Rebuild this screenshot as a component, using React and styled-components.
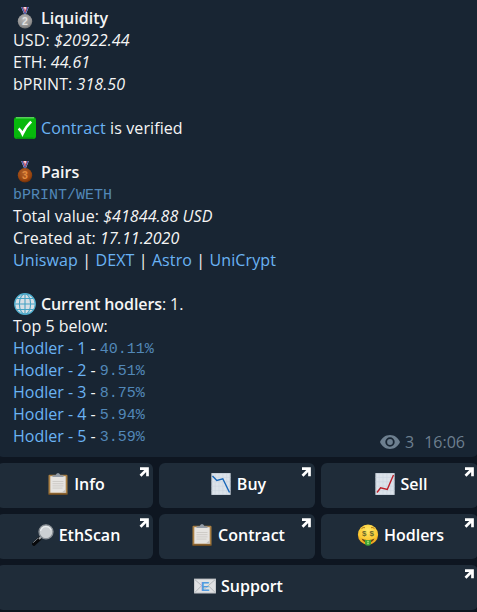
import React from "react";
import styled, { createGlobalStyle } from "styled-components";

const GlobalStyle = createGlobalStyle`
  * { box-sizing: border-box; }
  html, body { margin: 0; background: #0e1621; overflow: hidden; }
  body { font-family: "Open Sans", "Noto Sans", sans-serif; font-size: 16px; color: #f5f5f5; }
`;

const Chat = styled.main`
  width: 481px;
  height: 612px;
  margin-left: -3px;
  overflow: hidden;
  background: #0e1621;
`;

const Message = styled.article`
  height: 457px;
  padding: 7px 13px 0 16px;
  background: #182533;
  border-radius: 0 0 6px 6px;
`;

const Line = styled.div`
  display: flex;
  align-items: center;
  height: 22px;
  line-height: 22px;
  white-space: pre;
  letter-spacing: ${(p) => p.$tracking || 0}px;
`;

const Strong = styled.strong`
  font-weight: 600;
`;

const Value = styled.em`
  font-style: italic;
`;

const Link = styled.a`
  color: #6ab3f3;
  text-decoration: none;
`;

const Code = styled.code`
  padding-top: 4px;
  font-family: "Liberation Mono", monospace;
  font-size: 15px;
  color: #5288b8;
`;

const Emoji = styled.svg`
  width: 22px;
  height: 22px;
  margin: 0 5px 0 1px;
  flex: none;
`;

const Meta = styled.span`
  display: flex;
  align-items: center;
  margin-left: auto;
  padding-top: 11px;
  color: #6d7f8f;
`;

const EyeIcon = styled.svg`
  width: 20px;
  height: 14px;
  margin-right: 5px;
`;

const Time = styled.time`
  margin-left: 10px;
`;

const Keyboard = styled.nav`
  display: grid;
  grid-template-columns: 156px 156px 157px;
  grid-auto-rows: 45px;
  gap: 6px;
  margin-top: 6px;
`;

const KeyButton = styled.button`
  position: relative;
  display: flex;
  align-items: center;
  justify-content: center;
  grid-column: ${(p) => (p.$wide ? "1 / -1" : "auto")};
  padding: 0 0 3px 1px;
  border: 0;
  border-radius: 6px;
  background: #1f2c39;
  color: #fff;
  font: 600 16px/22px "Open Sans", "Noto Sans", sans-serif;
`;

const Arrow = styled.svg`
  position: absolute;
  top: 4px;
  right: 4px;
  width: 10px;
  height: 10px;
`;

function Medal({ place, light, base, dark, ink }) {
  const id = `medal${place}`;
  return (
    <Emoji viewBox="0 0 22 22">
      <defs>
        <radialGradient id={id} cx=".45" cy=".35" r=".7">
          <stop offset="0" stopColor={light} />
          <stop offset=".7" stopColor={base} />
          <stop offset="1" stopColor={dark} />
        </radialGradient>
      </defs>
      <path d="M7.2 0h7.600L11.800 7.500h-1.600z" fill="#eee6f1" />
      <path d="M7.200 0h1.700l2.500 6.500-.8 1z" fill="#4257a8" />
      <path d="M9 0h.8l1.600 4.200-.4 1z" fill="#cf4652" />
      <path d="M14.800 0h-1.700l-2.500 6.500.8 1z" fill="#4257a8" />
      <path d="M13.200 0h-.8l-1.800 5 .5 1.200z" fill="#cf4652" />
      <circle cx="11" cy="14.300" r="7.200" fill={`url(#${id})`} />
      <text x="11" y="18" textAnchor="middle" fontFamily="Liberation Sans, sans-serif" fontSize="10.500" fontWeight="700" fill={ink}>{place}</text>
    </Emoji>
  );
}

function CheckEmoji() {
  return (
    <Emoji viewBox="0 0 22 22">
      <rect width="22" height="22" rx="3" fill="#07b80c" />
      <path d="M2 .8h18" stroke="#65d268" strokeWidth="1.3" />
      <path d="M2.500 21.200h17" stroke="#078d10" strokeWidth="1.3" />
      <path d="M4.600 11.500c1.800 1.500 2.900 3.200 3.900 5.400C10.600 12.300 13 8.400 17.200 4.600" fill="none" stroke="#fff" strokeWidth="2.600" />
    </Emoji>
  );
}

function GlobeEmoji() {
  return (
    <Emoji viewBox="0 0 22 22">
      <circle cx="11" cy="11" r="10.300" fill="#d7dfe5" stroke="#4fb0d0" strokeWidth="1.200" />
      <g fill="none" stroke="#45a2c3" strokeWidth="1.100">
        <path d="M11 .8v20.400M.8 11h20.400M3 5.500h16M3 16.500h16" />
        <ellipse cx="11" cy="11" rx="5.600" ry="10.200" />
      </g>
    </Emoji>
  );
}

function ClipboardEmoji() {
  return (
    <Emoji viewBox="0 0 22 22">
      <rect x="1.500" y="1.800" width="19" height="20" rx="1" fill="#a97f43" />
      <path d="M1.500 20.500h19v1.300h-19z" fill="#68471e" />
      <path d="M3.300 3.200h15.400v16.500H3.300z" fill="#e5e3e0" />
      <path d="M14.500 19.700l4.200-3.500v3.500z" fill="#c5c1bc" />
      <path d="M5.500 8.500h11M5.500 10.700h11M5.500 12.900h11M5.500 15.100h10" stroke="#cecbc7" />
      <path d="M5.500 4V2.300h3L10 .3h2l1.500 2h3V4z" fill="#929ba6" />
    </Emoji>
  );
}

function ChartEmoji({ rising }) {
  return (
    <Emoji viewBox="0 0 22 22">
      <path d="M1.500 0h19v22h-19z" fill="#dce3ea" />
      <path d="M5.200 0v22M9 0v22M12.900 0v22M16.700 0v22M1.500 4.400h19M1.500 8.800h19M1.500 13.200h19M1.500 17.600h19" stroke="#c9d3de" strokeWidth=".5" />
      <path d="M2 .5h18v21H2z" fill="none" stroke="#bcc6d1" strokeWidth=".7" />
      {rising ? (
        <path d="M3 19.500l3.600-4.700 6.700 1.600 2.500-6L19.500 2" fill="none" stroke="#bd1f29" strokeWidth="1.400" />
      ) : (
        <path d="M2.500 3l4.300 4.500 6-1.700L19.500 19.500" fill="none" stroke="#1766b8" strokeWidth="1.400" />
      )}
    </Emoji>
  );
}

function MagnifierEmoji() {
  return (
    <Emoji viewBox="0 0 22 22">
      <path d="M2 20l5.400-5.200" stroke="#08090b" strokeWidth="3.800" strokeLinecap="round" />
      <path d="M1.200 18.700l5-4.700" stroke="#767b80" strokeWidth="1" />
      <path d="M7 15l2-2" stroke="#a5a9ad" strokeWidth="2" />
      <circle cx="14" cy="7.800" r="7" fill="#ccd0d3" stroke="#898f95" strokeWidth="1.300" />
      <path d="M8.600 7a5.500 5.500 0 0 1 10.500-1" fill="none" stroke="#e9edef" strokeWidth="1.300" />
    </Emoji>
  );
}

function MoneyEmoji() {
  return (
    <Emoji viewBox="0 0 22 22">
      <defs>
        <radialGradient id="moneyFace" cx=".5" cy=".3" r=".7">
          <stop offset="0" stopColor="#ffe967" />
          <stop offset=".7" stopColor="#fbc730" />
          <stop offset="1" stopColor="#e99517" />
        </radialGradient>
      </defs>
      <circle cx="11" cy="10.700" r="10.100" fill="url(#moneyFace)" />
      <path d="M4.500 4.600Q6 3 8 3.700M14 3.700q2-.700 3.500 .900" fill="none" stroke="#a16c13" strokeWidth=".900" />
      <g fill="#69682a" fontFamily="Liberation Sans, sans-serif" fontSize="8" fontWeight="700" textAnchor="middle">
        <text x="7.200" y="12">$</text>
        <text x="14.800" y="12">$</text>
      </g>
      <path d="M4.500 14.500q6.500 3.400 13 0-2 4.300-6.500 4.300t-6.500-4.300z" fill="#704714" />
      <path d="M8 15.800q3 .800 6 0v3.500q0 2.500-3 2.500t-3-2.500z" fill="#42a535" />
      <path d="M11 16.500v4M10 17.500h2M10 19.500h2" stroke="#a2df70" strokeWidth=".800" />
    </Emoji>
  );
}

function MailEmoji() {
  return (
    <Emoji viewBox="0 0 22 22">
      <path d="M0 3.800h22v14.500H0z" fill="#dfe1e3" />
      <path d="M.5 4.300L11 13.500 21.500 4.300M.5 17.800l7-7M21.500 17.800l-7-7" fill="none" stroke="#aeb2b6" strokeWidth=".900" />
      <path d="M.4 4.200h21.200v13.700H.4z" fill="none" stroke="#b9bcc0" strokeWidth=".7" />
      <text x="11" y="15.700" textAnchor="middle" fontFamily="Liberation Sans, sans-serif" fontSize="13" fontWeight="700" fill="#529ae0">E</text>
    </Emoji>
  );
}

const hodlers = ["40.11%", "9.51%", "8.75%", "5.94%", "3.59%"];

const actions = [
  { label: "Info", icon: <ClipboardEmoji /> },
  { label: "Buy", icon: <ChartEmoji /> },
  { label: "Sell", icon: <ChartEmoji rising /> },
  { label: "EthScan", icon: <MagnifierEmoji /> },
  { label: "Contract", icon: <ClipboardEmoji /> },
  { label: "Hodlers", icon: <MoneyEmoji /> },
  { label: "Support", icon: <MailEmoji />, wide: true },
];

export default function App() {
  return (
    <>
      <GlobalStyle />
      <Chat>
        <Message>
          <Line><Medal place="2" light="#b9b9b9" base="#929292" dark="#666" ink="#e1e1e1" /><Strong>Liquidity</Strong></Line>
          <Line $tracking={0.13}>USD: <Value>$20922.44</Value></Line>
          <Line>ETH: <Value>44.61</Value></Line>
          <Line $tracking={0.07}>bPRINT: <Value>318.50</Value></Line>
          <Line />
          <Line $tracking={0.1}><CheckEmoji /><Link>Contract</Link> is verified</Line>
          <Line />
          <Line><Medal place="3" light="#b4622b" base="#96440f" dark="#612706" ink="#e48b3d" /><Strong>Pairs</Strong></Line>
          <Line><Code>bPRINT/WETH</Code></Line>
          <Line $tracking={0.07}>Total value: <Value>$41844.88 USD</Value></Line>
          <Line $tracking={0.08}>Created at: <Value>17.11.2020</Value></Line>
          <Line $tracking={0.11}><Link>Uniswap</Link> | <Link>DEXT</Link> | <Link>Astro</Link> | <Link>UniCrypt</Link></Line>
          <Line />
          <Line $tracking={-0.09}><GlobeEmoji /><Strong>Current hodlers</Strong>: 1.</Line>
          <Line>Top 5 below:</Line>
          {hodlers.map((share, i) => (
            <Line key={share}>
              <Link>Hodler - {i + 1}</Link> - <Code>{share}</Code>
              {i === hodlers.length - 1 && (
                <Meta>
                  <EyeIcon viewBox="0 0 20 14">
                    <path fill="currentColor" fillRule="evenodd" d="M10 0C5.500 0 1.700 2.800 0 7c1.700 4.200 5.500 7 10 7s8.300-2.800 10-7c-1.700-4.200-5.500-7-10-7zm0 11.700a4.700 4.700 0 1 1 0-9.400 4.700 4.700 0 0 1 0 9.400z" />
                    <circle cx="10" cy="7" r="2.900" fill="currentColor" />
                  </EyeIcon>
                  3<Time>16:06</Time>
                </Meta>
              )}
            </Line>
          ))}
        </Message>
        <Keyboard>
          {actions.map(({ label, icon, wide }) => (
            <KeyButton key={label} $wide={wide}>
              {icon}{label}
              <Arrow viewBox="0 0 10 10">
                <path d="M1 1.700h7.500V9.200M8 2.200L1.500 8.700" fill="none" stroke="#fff" strokeWidth="2.700" />
              </Arrow>
            </KeyButton>
          ))}
        </Keyboard>
      </Chat>
    </>
  );
}
